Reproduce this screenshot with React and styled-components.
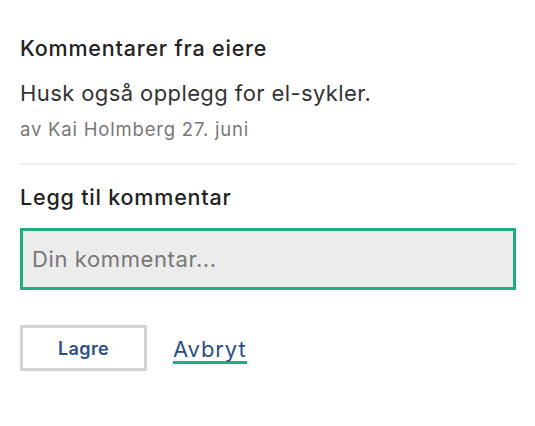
import React from "react";
import styled, { createGlobalStyle } from "styled-components";

const Global = createGlobalStyle`
  html, body { margin: 0; padding: 0; background: #fff; }
  body { font-family: Inter, "Noto Sans", sans-serif; -webkit-font-smoothing: antialiased; }
  * { box-sizing: border-box; }
`;

const Page = styled.div`
  padding: 34px 19px 0 20px;
  display: flex;
  flex-direction: column;
`;

const Section = styled.section`
  display: flex;
  flex-direction: column;
`;

const Title = styled.h2`
  margin: 0;
  font-size: 21.5px;
  font-weight: 500;
  letter-spacing: 0.8px;
  line-height: 28px;
  color: #222;
`;

const CommentText = styled.p`
  margin: 16px 0 0;
  font-size: 22px;
  font-weight: 400;
  letter-spacing: 0.4px;
  line-height: 30px;
  color: #333;
`;

const Meta = styled.p`
  margin: 8px 0 0;
  font-size: 18.5px;
  letter-spacing: 0.8px;
  line-height: 26px;
  color: #787878;
`;

const Divider = styled.hr`
  margin: 21px 0 18px;
  border: 0;
  height: 2px;
  background: #f0f0f0;
`;

const Input = styled.input`
  margin-top: 17px;
  width: 100%;
  height: 62px;
  border: 3px solid #1fae7e;
  background: #ececec;
  padding: 0 9px;
  font-family: inherit;
  font-size: 22px;
  letter-spacing: 0.6px;
  color: #333;
  outline: none;
  &::placeholder { color: #777; }
`;

const Actions = styled.div`
  display: flex;
  align-items: flex-start;
  gap: 26px;
  margin-top: 35px;
`;

const SaveButton = styled.button`
  width: 127px;
  height: 46px;
  background: #fff;
  border: 3px solid #d3d3d3;
  font-family: inherit;
  font-size: 18px;
  font-weight: 600;
  letter-spacing: 0.4px;
  color: #2b5089;
  cursor: pointer;
`;

const CancelLink = styled.a`
  margin-top: 12px;
  font-size: 22px;
  letter-spacing: 0.9px;
  color: #2b5089;
  text-decoration: none;
  border-bottom: 3px solid #1fae7e;
  line-height: 24px;
  cursor: pointer;
`;

export default function App() {
  return (
    <>
      <Global />
      <Page>
        <Section>
          <Title>Kommentarer fra eiere</Title>
          <CommentText>Husk også opplegg for el-sykler.</CommentText>
          <Meta>av Kai Holmberg 27. juni</Meta>
        </Section>
        <Divider />
        <Section>
          <Title>Legg til kommentar</Title>
          <Input placeholder="Din kommentar..." />
          <Actions>
            <SaveButton>Lagre</SaveButton>
            <CancelLink>Avbryt</CancelLink>
          </Actions>
        </Section>
      </Page>
    </>
  );
}
